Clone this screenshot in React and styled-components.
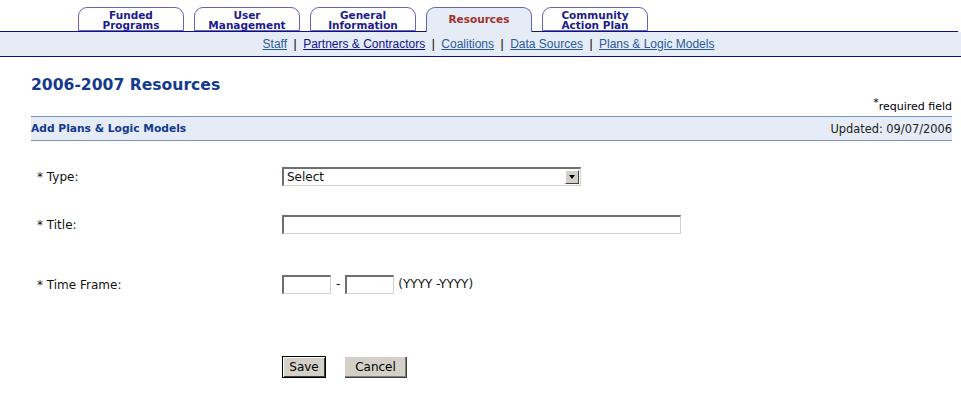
import React from "react";
import styled, { createGlobalStyle } from "styled-components";

const GlobalStyle = createGlobalStyle`
  html, body {
    margin: 0;
    padding: 0;
    background: #fff;
  }
  body {
    font-family: "DejaVu Sans", Verdana, sans-serif;
    font-size: 11px;
    color: #000;
  }
`;

const Page = styled.div`
  width: 961px;
`;

const TabBar = styled.div`
  display: flex;
  align-items: flex-end;
  gap: 10px;
  height: 31px;
  padding-left: 78px;
  width: 880px;
  border-bottom: 1px solid #11118c;
`;

const Tab = styled.a`
  box-sizing: border-box;
  width: 106px;
  height: ${(p) => (p.active ? "25px" : "24px")};
  margin-bottom: ${(p) => (p.active ? "-1px" : "0")};
  border: 1px solid #6464b4;
  border-bottom: ${(p) => (p.active ? "none" : "1px solid #6464b4")};
  border-radius: 9px 9px 0 0;
  background: ${(p) => (p.active ? "#e5ecf6" : "#fff")};
  color: ${(p) => (p.active ? "#a0302f" : "#1c1c8e")};
  font-family: "DejaVu Sans", Verdana, sans-serif;
  font-weight: bold;
  font-size: 10.5px;
  line-height: 10.5px;
  display: flex;
  align-items: center;
  justify-content: center;
  text-align: center;
  padding-top: ${(p) => (p.active ? "0" : "2px")};
  padding-bottom: ${(p) => (p.active ? "2px" : "0")};
  text-decoration: none;
`;

const SubNav = styled.div`
  height: 24px;
  background: #e5ecf6;
  border-bottom: 1px solid #11118c;
  display: flex;
  align-items: center;
  justify-content: center;
  padding-left: 16px;
  font-family: "Liberation Sans", Arial, sans-serif;
  font-size: 12px;
  color: #000;
`;

const SubLink = styled.a`
  color: ${(p) => (p.dark ? "#11118c" : "#2a5a9c")};
  text-decoration: underline;
`;

const Sep = styled.span`
  margin: 0 6.5px;
`;

const Content = styled.div`
  padding: 0 9px 0 31px;
`;

const Heading = styled.h1`
  margin: 17px 0 0;
  font-family: "DejaVu Sans", Verdana, sans-serif;
  font-size: 15.6px;
  font-weight: bold;
  color: #133a8e;
  line-height: 22px;
`;

const Required = styled.div`
  text-align: right;
  margin-top: 4px;
  font-size: 11px;
  line-height: 14px;
  color: #000;
  sup {
    font-size: 11px;
    vertical-align: 4px;
    line-height: 0;
  }
`;

const SectionBar = styled.div`
  margin-top: 2px;
  height: 23px;
  background: #e5ecf6;
  border-top: 1px solid #7691c8;
  border-bottom: 1px solid #7691c8;
  display: flex;
  align-items: center;
  justify-content: space-between;
`;

const SectionTitle = styled.span`
  font-weight: bold;
  font-size: 10.7px;
  color: #133a8e;
`;

const Updated = styled.span`
  font-size: 11.4px;
  color: #222;
`;

const Form = styled.div`
  display: grid;
  grid-template-columns: 251px 1fr;
  margin-top: 26px;
`;

const Label = styled.div`
  padding-left: 6px;
  height: ${(p) => p.h}px;
  padding-top: 3px;
  box-sizing: border-box;
  font-size: 12px;
  color: #111;
`;

const Field = styled.div`
  height: ${(p) => p.h}px;
  display: flex;
  align-items: flex-start;
  gap: 4px;
  font-size: 12px;
  color: #111;
  line-height: 18px;
`;

const SelectBox = styled.div`
  position: relative;
  box-sizing: border-box;
  width: 299px;
  height: 19px;
  border-top: 2px solid #6e6e6e;
  border-left: 2px solid #6e6e6e;
  border-bottom: 1px solid #d4d0c8;
  border-right: 1px solid #d4d0c8;
  background: #fff;
  font-size: 12px;
  line-height: 16px;
  padding-left: 3px;
`;

const ArrowBtn = styled.span`
  position: absolute;
  right: 1px;
  top: 1px;
  width: 14px;
  height: 14px;
  box-sizing: border-box;
  background: #d4d0c8;
  border-top: 1px solid #fff;
  border-left: 1px solid #fff;
  border-right: 1px solid #404040;
  border-bottom: 1px solid #404040;
  display: flex;
  align-items: center;
  justify-content: center;
  &::after {
    content: "";
    border-left: 3.5px solid transparent;
    border-right: 3.5px solid transparent;
    border-top: 4px solid #000;
  }
`;

const TextInput = styled.input`
  box-sizing: border-box;
  width: ${(p) => p.w}px;
  height: 19px;
  margin: 0;
  padding: 0 2px;
  border-top: 2px solid #6e6e6e;
  border-left: 2px solid #6e6e6e;
  border-bottom: 1px solid #d4d0c8;
  border-right: 1px solid #d4d0c8;
  background: #fff;
  font-size: 11px;
`;

const Dash = styled.span`
  margin: 0 1px;
`;

const Buttons = styled.div`
  display: flex;
  gap: 18px;
`;

const Button = styled.button`
  box-sizing: border-box;
  height: 22px;
  width: ${(p) => (p.primary ? "44px" : "63px")};
  padding: 0;
  margin: 0;
  background: #d4d0c8;
  font-family: "DejaVu Sans", Verdana, sans-serif;
  font-size: 12px;
  color: #000;
  border: none;
  box-shadow: ${(p) =>
    p.primary
      ? "inset 0 0 0 1px #000, inset 1px 1px 0 1px #fff, inset -1px -1px 0 1px #404040"
      : "inset 1px 1px 0 #fff, inset -1px -1px 0 #404040, inset -2px -2px 0 #808080"};
`;

const tabs = [
  ["Funded", "Programs"],
  ["User", "Management"],
  ["General", "Information"],
  ["Resources"],
  ["Community", "Action Plan"],
];

export default function App() {
  return (
    <Page>
      <GlobalStyle />
      <TabBar>
        {tabs.map((t) => (
          <Tab key={t[0]} active={t[0] === "Resources"}>
            <span>
              {t[0]}
              {t[1] && <br />}
              {t[1]}
            </span>
          </Tab>
        ))}
      </TabBar>
      <SubNav>
        <SubLink>Staff</SubLink>
        <Sep>|</Sep>
        <SubLink dark>Partners &amp; Contractors</SubLink>
        <Sep>|</Sep>
        <SubLink>Coalitions</SubLink>
        <Sep>|</Sep>
        <SubLink>Data Sources</SubLink>
        <Sep>|</Sep>
        <SubLink>Plans &amp; Logic Models</SubLink>
      </SubNav>
      <Content>
        <Heading>2006-2007 Resources</Heading>
        <Required>
          <sup>*</sup>required field
        </Required>
        <SectionBar>
          <SectionTitle>Add Plans &amp; Logic Models</SectionTitle>
          <Updated>Updated: 09/07/2006</Updated>
        </SectionBar>
        <Form>
          <Label h={48}>* Type:</Label>
          <Field h={48}>
            <SelectBox>
              Select
              <ArrowBtn />
            </SelectBox>
          </Field>
          <Label h={60}>* Title:</Label>
          <Field h={60}>
            <TextInput w={399} />
          </Field>
          <Label h={81}>* Time Frame:</Label>
          <Field h={81}>
            <TextInput w={49} />
            <Dash>-</Dash>
            <TextInput w={49} />
            <span>(YYYY -YYYY)</span>
          </Field>
          <div />
          <Buttons>
            <Button primary>Save</Button>
            <Button>Cancel</Button>
          </Buttons>
        </Form>
      </Content>
    </Page>
  );
}
